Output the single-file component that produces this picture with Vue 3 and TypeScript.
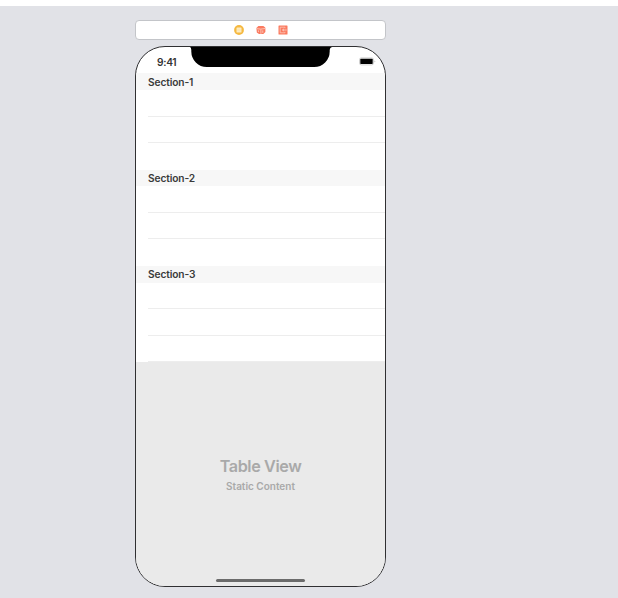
<script setup lang="ts">
interface Section {
  title: string
  rows: number
}

const sections: Section[] = [
  { title: 'Section-1', rows: 3 },
  { title: 'Section-2', rows: 3 },
  { title: 'Section-3', rows: 3 },
]
</script>

<template>
  <main class="canvas">
    <div class="scene-bar">
      <svg class="scene-icon" viewBox="0 0 10 10" aria-hidden="true">
        <circle cx="5" cy="5" r="4.9" fill="#f5b83f" />
        <rect x="2.5" y="2.5" width="5" height="5" rx="0.6" fill="#fdebc0" />
        <path d="M3.3 5h3.4" stroke="#fbdc98" stroke-width="0.6" />
      </svg>
      <svg class="scene-icon" viewBox="0 0 10 10" aria-hidden="true">
        <path d="M0.4 3.1 2.4 1.1H7.4L9.4 2.8V7L7.4 8.9H3L0.8 7.4Z" fill="#fb7a5f" />
        <path d="M0.8 3.7 4.8 4.1 9 3.5M4.9 4.4V8.8M2.4 5.4V7.1M6.8 5.4V7.9" fill="none" stroke="#fdd5ca" stroke-width="0.8" />
      </svg>
      <svg class="scene-icon" viewBox="0 0 10 10" aria-hidden="true">
        <rect x="0.5" y="0.6" width="9" height="8.8" rx="0.5" fill="#fb7a5f" />
        <path d="M7 3.300V2.200H2.200v5.600H7V6.700" fill="none" stroke="#fdc9bb" stroke-width="0.8" />
        <path d="M4.400 5h4.300M6 3.800 4.600 5 6 6.200" fill="none" stroke="#fdd5ca" stroke-width="0.8" />
      </svg>
    </div>

    <div class="phone">
      <header class="status">
        <span class="time">9:41</span>
        <svg class="notch" viewBox="0 0 142 21" aria-hidden="true">
          <path d="M0 0H142Q139.800 0.300 139.700 3V4.500A15.500 15.500 0 0 1 124.200 20H16.800A15.500 15.500 0 0 1 1.300 4.500V3Q1.200 0.300 0 0Z" fill="#000" />
        </svg>
        <svg class="battery" viewBox="0 0 17 9" aria-hidden="true">
          <rect x="0.5" y="0.900" width="14" height="7" rx="1.800" fill="#fff" stroke="#c4c4c4" stroke-width="0.800" />
          <rect x="1.300" y="1.700" width="12.400" height="5.400" rx="0.900" fill="#000" />
          <path d="M15.600 3.200Q17 4.400 15.600 5.600Z" fill="#999" />
        </svg>
      </header>

      <section v-for="section in sections" :key="section.title" class="group">
        <h2 class="group-title">{{ section.title }}</h2>
        <div v-for="row in section.rows" :key="row" class="row"></div>
      </section>

      <div class="placeholder">
        <div class="placeholder-title">Table View</div>
        <div class="placeholder-note">Static Content</div>
        <div class="home-indicator"></div>
      </div>
    </div>
  </main>
</template>

<style>
body {
  background: #fff;
}
</style>

<style scoped>
.canvas {
  box-sizing: border-box;
  height: 592px;
  margin-top: 6px;
  padding: 14px 0 0 135px;
  background: #e1e2e7;
  font-family: Inter, "Liberation Sans", sans-serif;
  overflow: hidden;
}

.scene-bar {
  box-sizing: border-box;
  display: flex;
  align-items: center;
  justify-content: center;
  gap: 12px;
  width: 251px;
  height: 20px;
  padding-left: 1px;
  border: 1px solid #c3c5c9;
  border-radius: 4px;
  background: #fff;
}

.scene-icon {
  width: 10px;
  height: 10px;
}

.phone {
  box-sizing: border-box;
  display: flex;
  flex-direction: column;
  width: 251px;
  height: 541px;
  margin-top: 6px;
  border: 1px solid #303032;
  border-radius: 30px;
  background: #fff;
  overflow: hidden;
}

.status {
  display: grid;
  grid-template-columns: 54px 142px 1fr;
  flex: none;
  height: 26.400px;
}

.time {
  padding: 8px 0 0 21px;
  font-size: 10.200px;
  font-weight: 600;
  line-height: 14px;
  letter-spacing: -0.300px;
  color: #333;
}

.notch {
  width: 142px;
  height: 21px;
}

.battery {
  width: 17px;
  height: 9px;
  margin: 10px 0 0 27px;
}

.group {
  flex: none;
  height: 96.200px;
}

.group-title {
  box-sizing: border-box;
  height: 16.800px;
  margin: 0 0 0.200px;
  padding-left: 12px;
  background: #f7f7f7;
  font-size: 10.200px;
  font-weight: 600;
  line-height: 17.200px;
  letter-spacing: -0.120px;
  color: #3a3a3a;
}

.group:first-of-type .group-title {
  line-height: 18px;
}

.row {
  box-sizing: border-box;
  height: 26.400px;
  margin-left: 12px;
  border-bottom: 1px solid #ededed;
}

.group:not(:last-of-type) .row:last-child {
  border-bottom: 0;
}

.placeholder {
  display: flex;
  flex: 1;
  flex-direction: column;
  align-items: center;
  background: #eaeaea;
  color: #a9a9a9;
}

.placeholder-title {
  margin-top: 93px;
  font-size: 16.200px;
  font-weight: 600;
  line-height: 22px;
  letter-spacing: -0.400px;
}

.placeholder-note {
  margin-top: 2px;
  font-size: 10px;
  font-weight: 600;
  line-height: 14px;
}

.home-indicator {
  width: 89px;
  height: 3px;
  margin: auto 0 4px;
  border-radius: 2px;
  background: #6b6b6b;
}
</style>
